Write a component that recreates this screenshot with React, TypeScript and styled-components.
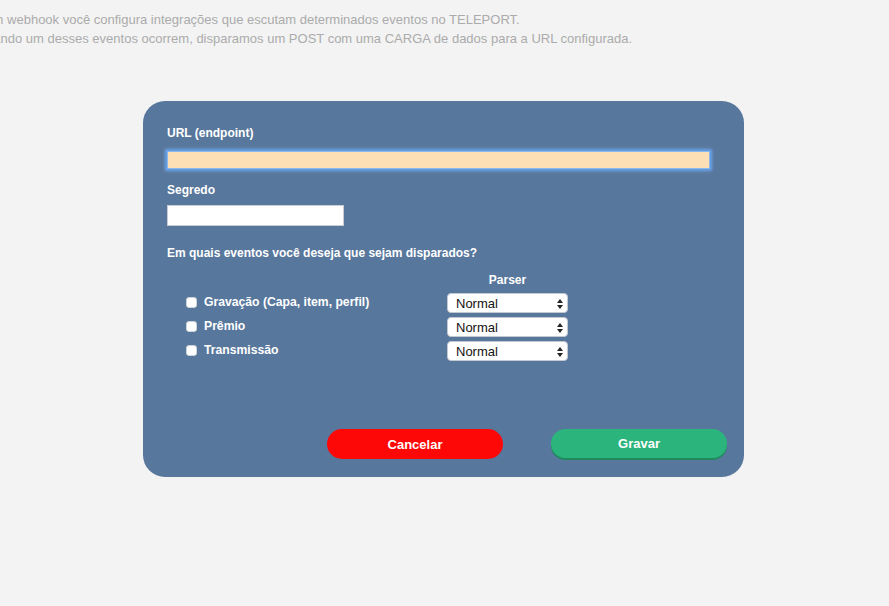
import React from "react";
import styled, { createGlobalStyle } from "styled-components";

const Global = createGlobalStyle`
  html, body { margin: 0; padding: 0; background: #f3f3f3; overflow: hidden; }
  body { font-family: "Liberation Sans", Arial, Helvetica, sans-serif; }
`;

const Page = styled.div`
  width: 889px;
  height: 606px;
  background: #f3f3f3;
  padding-top: 10px;
  box-sizing: border-box;
  overflow: hidden;
`;

const Intro = styled.p`
  margin: 0 0 0 -24px;
  font-size: 13px;
  line-height: 19px;
  color: #ababab;
  white-space: nowrap;
`;

const Panel = styled.form`
  margin: 53px 0 0 143px;
  width: 601px;
  height: 376px;
  box-sizing: border-box;
  background: #58779c;
  border-radius: 22px;
  padding: 25px 17px 18px 24px;
  display: flex;
  flex-direction: column;
`;

const Label = styled.label`
  display: block;
  color: #ffffff;
  font-size: 12px;
  font-weight: bold;
  line-height: 14px;
`;

const UrlInput = styled.input`
  display: block;
  margin: 11px 0 0 0;
  width: 543px;
  height: 18px;
  box-sizing: border-box;
  border: 1px solid #8fb7ea;
  background: #fcdfb4;
  outline: none;
  box-shadow: 0 0 0 1px #5a9ce8, 0 0 3px 2px #6fa6ea;
  padding: 0 2px;
  font-size: 13px;
  caret-color: #000;
`;

const SecretInput = styled.input`
  display: block;
  margin: 8px 0 0 0;
  width: 177px;
  height: 21px;
  box-sizing: border-box;
  border: 1px solid #c9cdd3;
  background: #ffffff;
  outline: none;
  padding: 0 3px;
  font-size: 13px;
`;

const Spaced = styled.div<{ $top: number }>`
  margin-top: ${(p) => p.$top}px;
`;

const Question = styled.div`
  margin-top: 20px;
  color: #ffffff;
  font-size: 12px;
  font-weight: bold;
  line-height: 14px;
`;

const EventGrid = styled.div`
  margin-top: 13px;
  display: grid;
  grid-template-columns: 280px 121px;
  row-gap: 4px;
  align-items: start;
`;

const ParserHead = styled.div`
  grid-column: 2;
  text-align: center;
  color: #ffffff;
  font-size: 12px;
  font-weight: bold;
  line-height: 14px;
  margin-bottom: 2px;
`;

const EventLabel = styled.label`
  display: flex;
  align-items: center;
  gap: 7px;
  padding-left: 19px;
  color: #ffffff;
  font-size: 12.2px;
  font-weight: bold;
  line-height: 14px;
  height: 18px;
`;

const Check = styled.span`
  width: 11px;
  height: 11px;
  box-sizing: border-box;
  background: #ffffff;
  border-radius: 3px;
  border: 1px solid #d0d4da;
  flex: none;
`;

const SelectBox = styled.div`
  position: relative;
  width: 121px;
  height: 20px;
  box-sizing: border-box;
  background: #ffffff;
  border-radius: 4px;
  border: 1px solid #c3c9d1;
  display: flex;
  align-items: center;
  padding-left: 8px;
  font-size: 13px;
  color: #111;
`;

const Arrows = styled.svg`
  position: absolute;
  right: 4px;
  top: 5px;
`;

const Buttons = styled.div`
  margin-top: auto;
  display: flex;
  justify-content: flex-end;
  gap: 48px;
`;

const Button = styled.button<{ $variant: "cancel" | "save" }>`
  width: 176px;
  border: none;
  border-radius: 15px;
  color: #ffffff;
  font-family: "Liberation Sans", Arial, sans-serif;
  font-size: 13px;
  font-weight: bold;
  cursor: pointer;
  background: ${(p) => (p.$variant === "cancel" ? "#fe0707" : "#2bb57d")};
  box-shadow: ${(p) => (p.$variant === "save" ? "0 2px 0 #1f8a5f" : "none")};
  margin-bottom: ${(p) => (p.$variant === "save" ? "1px" : "0")};
  height: ${(p) => (p.$variant === "save" ? "29px" : "30px")};
`;

const events = ["Gravação (Capa, item, perfil)", "Prêmio", "Transmissão"];

function Select() {
  return (
    <SelectBox>
      Normal
      <Arrows width="6" height="10" viewBox="0 0 6 10">
        <path d="M3 0 L6 4 L0 4 Z" fill="#222" />
        <path d="M0 6 L6 6 L3 10 Z" fill="#222" />
      </Arrows>
    </SelectBox>
  );
}

export default function App() {
  return (
    <Page>
      <Global />
      <Intro>
        Num webhook você configura integrações que escutam determinados eventos no TELEPORT.
        <br />
        Quando um desses eventos ocorrem, disparamos um POST com uma CARGA de dados para a URL configurada.
      </Intro>
      <Panel onSubmit={(e) => e.preventDefault()}>
        <Label>URL (endpoint)</Label>
        <UrlInput autoFocus />
        <Spaced $top={14}>
          <Label>Segredo</Label>
        </Spaced>
        <SecretInput />
        <Question>Em quais eventos você deseja que sejam disparados?</Question>
        <EventGrid>
          <ParserHead>Parser</ParserHead>
          {events.map((ev) => (
            <React.Fragment key={ev}>
              <EventLabel>
                <Check />
                {ev}
              </EventLabel>
              <Select />
            </React.Fragment>
          ))}
        </EventGrid>
        <Buttons>
          <Button type="button" $variant="cancel">Cancelar</Button>
          <Button type="button" $variant="save">Gravar</Button>
        </Buttons>
      </Panel>
    </Page>
  );
}
